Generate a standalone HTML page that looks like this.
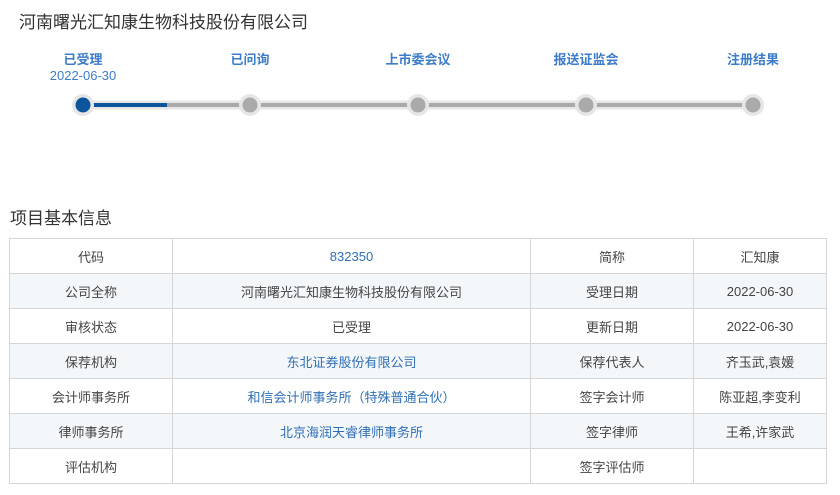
<!DOCTYPE html><html><head><meta charset="utf-8"><style>
body{margin:0;width:840px;height:495px;background:#fff;font-family:"Liberation Sans","Noto Sans CJK SC",sans-serif;position:relative;overflow:hidden}
.t{position:absolute;left:19px;top:8px;font-size:17px;color:#333}
.lab{position:absolute;top:49px;width:120px;margin-left:-60px;text-align:center;font-size:13px;font-weight:bold;color:#3d7cc9}
.date{position:absolute;top:68px;left:23px;width:120px;text-align:center;font-size:13px;color:#3d7cc9}
.h{position:absolute;left:10px;top:204px;font-size:17px;color:#333}
table{position:absolute;left:9px;top:238px;width:818px;border-collapse:collapse;font-size:13px;color:#444}
td{border:1px solid #d6d6d6;height:34px;text-align:center;padding:0}
tr:nth-child(even) td{background:#f4f7fa}
.b{color:#2f6fb5}
</style></head><body>
<div class="t">河南曙光汇知康生物科技股份有限公司</div>
<div class="lab" style="left:83px">已受理</div>
<div class="lab" style="left:250px">已问询</div>
<div class="lab" style="left:418px">上市委会议</div>
<div class="lab" style="left:586px">报送证监会</div>
<div class="lab" style="left:753px">注册结果</div>
<div class="date">2022-06-30</div>
<svg style="position:absolute;left:0;top:90px" width="840" height="30">
<line x1="83" y1="15" x2="753" y2="15" stroke="#e6e6e6" stroke-width="9"/>
<line x1="83" y1="15" x2="753" y2="15" stroke="#aaa" stroke-width="4"/>
<line x1="83" y1="15" x2="167" y2="15" stroke="#0b559c" stroke-width="4"/>
<g fill="#e6e6e6"><circle cx="83" cy="15" r="11"/><circle cx="250" cy="15" r="11"/><circle cx="418" cy="15" r="11"/><circle cx="586" cy="15" r="11"/><circle cx="753" cy="15" r="11"/></g>
<circle cx="83" cy="15" r="7.5" fill="#0b559c"/>
<g fill="#aaa"><circle cx="250" cy="15" r="7.5"/><circle cx="418" cy="15" r="7.5"/><circle cx="586" cy="15" r="7.5"/><circle cx="753" cy="15" r="7.5"/></g>
</svg>
<div class="h">项目基本信息</div>
<table>
<colgroup><col style="width:163px"><col style="width:358px"><col style="width:163px"><col></colgroup>
<tr><td>代码</td><td class="b">832350</td><td>简称</td><td>汇知康</td></tr>
<tr><td>公司全称</td><td>河南曙光汇知康生物科技股份有限公司</td><td>受理日期</td><td>2022-06-30</td></tr>
<tr><td>审核状态</td><td>已受理</td><td>更新日期</td><td>2022-06-30</td></tr>
<tr><td>保荐机构</td><td class="b">东北证券股份有限公司</td><td>保荐代表人</td><td>齐玉武,袁媛</td></tr>
<tr><td>会计师事务所</td><td class="b">和信会计师事务所（特殊普通合伙）</td><td>签字会计师</td><td>陈亚超,李变利</td></tr>
<tr><td>律师事务所</td><td class="b">北京海润天睿律师事务所</td><td>签字律师</td><td>王希,许家武</td></tr>
<tr><td>评估机构</td><td></td><td>签字评估师</td><td></td></tr>
</table>
</body></html>
